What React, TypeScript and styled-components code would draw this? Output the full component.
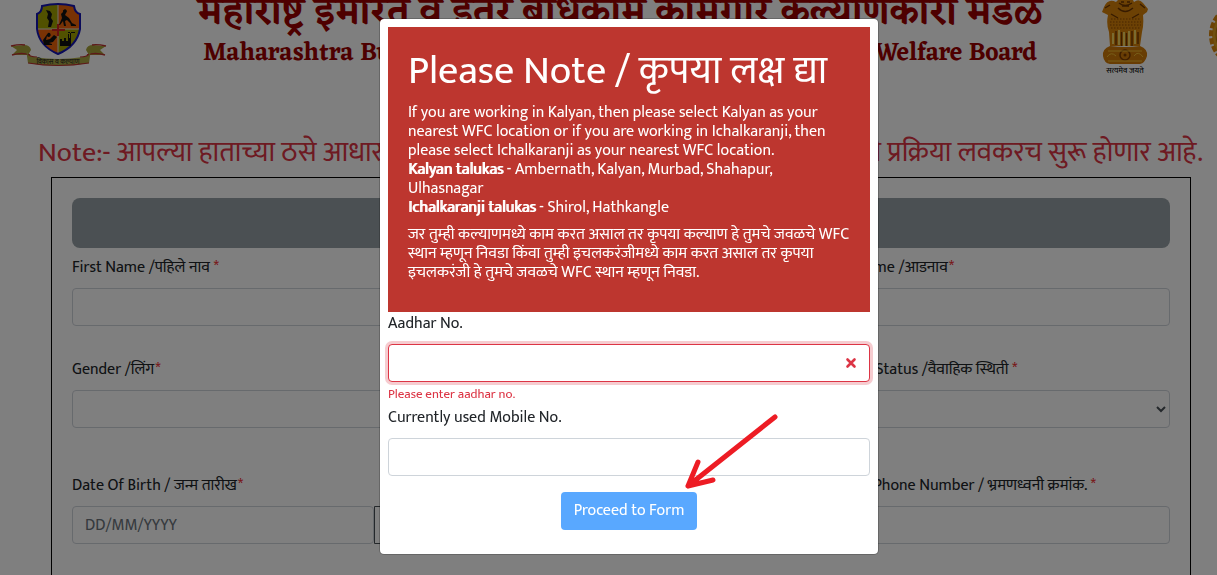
import React from "react";
import styled, { createGlobalStyle } from "styled-components";

const GlobalStyle = createGlobalStyle`
  *, *::before, *::after { box-sizing: border-box; }
  html, body { height: 100%; }
  body {
    margin: 0;
    overflow: hidden;
    background: #fff;
    color: #212529;
    font-family: Mukta, Lato, "Noto Sans Devanagari", "Noto Sans", sans-serif;
    font-size: 16px;
    line-height: 24px;
  }
`;

const Header = styled.header`
  display: flex;
  align-items: flex-start;
  height: 96px;
  padding-left: 10px;
  overflow: hidden;
`;

const BoardLogo = styled.svg`
  flex: none;
  width: 97px;
  height: 72px;
`;

const Titles = styled.div`
  flex: 1;
  display: flex;
  flex-direction: column;
  align-items: center;
  padding-left: 32px;
  color: #9c0000;
  white-space: nowrap;
`;

const TitleMarathi = styled.div`
  height: 36px;
  font-family: Eczar, Mukta, "Noto Sans Devanagari", sans-serif;
  font-size: 37px;
  line-height: 28px;
  font-weight: 600;
`;

const TitleEnglish = styled.div`
  display: flex;
  gap: 32px;
  font-family: Eczar, "Liberation Serif", serif;
  font-size: 25px;
  line-height: 36px;
  font-weight: 600;
`;

const Emblem = styled.svg`
  flex: none;
  width: 48px;
  height: 76px;
  margin-right: 58px;
`;

const Seal = styled.svg`
  flex: none;
  width: 70px;
  height: 70px;
  margin-right: -60px;
`;

const Notice = styled.p`
  display: flex;
  justify-content: space-between;
  margin: 32px 14px 0 38px;
  height: 49px;
  color: #dc3545;
  font-size: 28px;
  line-height: 50px;
  white-space: nowrap;
`;

const FormCard = styled.form`
  margin: 0 26px 0 51px;
  padding: 20px;
  border: 1px solid #000;
`;

const SectionBar = styled.div`
  height: 50px;
  border-radius: 8px;
  background: #96a0a6;
`;

const Grid = styled.div`
  display: grid;
  grid-template-columns: repeat(3, 1fr);
  column-gap: 30px;
  padding-top: 8px;
`;

const Field = styled.div<{ $tall?: boolean }>`
  display: flex;
  flex-direction: column;
  gap: 8px;
  height: ${(p) => (p.$tall ? 116 : 102)}px;
`;

const Label = styled.label`
  line-height: 24px;
  white-space: nowrap;
`;

const Star = styled.span`
  color: #f01420;
`;

const Input = styled.input<{ $invalid?: boolean }>`
  display: block;
  width: 100%;
  height: 38px;
  padding: 6px 12px;
  border: 1px solid ${(p) => (p.$invalid ? "#dc3545" : "#ced4da")};
  border-radius: 4px;
  background: #fff;
  box-shadow: ${(p) => (p.$invalid ? "0 0 0 3px rgba(220, 53, 69, 0.25)" : "none")};
  color: #495057;
  font: inherit;
  outline: none;
  &::placeholder { color: #6c757d; opacity: 1; }
`;

const Select = styled.select`
  width: 100%;
  height: 38px;
  padding: 6px 8px;
  border: 1px solid #ced4da;
  border-radius: 4px;
  background: #fff;
  color: #495057;
  font: inherit;
`;

const DateGroup = styled.div`
  display: flex;
`;

const DateButton = styled.button`
  flex: none;
  width: 44px;
  height: 38px;
  border: 1px solid #495057;
  border-radius: 0 4px 4px 0;
  background: #fff;
`;

const Backdrop = styled.div`
  position: fixed;
  inset: 0;
  display: flex;
  justify-content: center;
  align-items: flex-start;
  padding: 18px 0 0 41px;
  background: rgba(0, 0, 0, 0.5);
`;

const Modal = styled.section`
  position: relative;
  width: 500px;
  padding: 8px 8px 24px;
  border: 1px solid rgba(0, 0, 0, 0.2);
  border-radius: 5px;
  background: #fff;
  background-clip: padding-box;
`;

const Alert = styled.div`
  height: 285px;
  padding: 20px;
  background: #bd362f;
  color: #fff;
`;

const AlertTitle = styled.h1`
  margin: 0 0 8px;
  font-size: 40px;
  line-height: 48px;
  font-weight: 400;
  white-space: nowrap;
`;

const AlertText = styled.p`
  margin: 0 0 8px;
  line-height: 19px;
  white-space: nowrap;
`;

const Heavy = styled.strong`
  font-weight: 400;
  text-shadow: 1px 0 currentColor;
`;

const ModalField = styled.div`
  display: flex;
  flex-direction: column;
  gap: 8px;
`;

const InputWrap = styled.div`
  position: relative;
`;

const Cross = styled.svg`
  position: absolute;
  right: 13px;
  top: 13px;
  width: 12px;
  height: 12px;
`;

const ErrorText = styled.p`
  margin: 0;
  padding-top: 3px;
  height: 24px;
  color: #dc3545;
  font-size: 13px;
  line-height: 19px;
`;

const Proceed = styled.button`
  display: block;
  width: 136px;
  height: 38px;
  margin: 16px auto 0;
  padding: 0;
  border: 0;
  border-radius: 4px;
  background: #59a8ff;
  color: #fff;
  font: inherit;
`;

const Pointer = styled.svg`
  position: absolute;
  left: 302px;
  top: 393px;
  width: 100px;
  height: 80px;
  pointer-events: none;
`;

function BoardLogoArt() {
  return (
    <BoardLogo viewBox="0 0 97 72" aria-label="विकास व कल्याण">
      <defs>
        <clipPath id="shield">
          <path d="M32 6 Q48 2 64 6 Q65 13 70 14 V29 Q67 46 48 54 Q29 46 27 29 V14 Q32 12 32 6Z" />
        </clipPath>
      </defs>
      <g clipPath="url(#shield)">
        <rect x="26" y="0" width="22" height="29" fill="#a3a300" />
        <rect x="48" y="0" width="24" height="29" fill="#f0650a" />
        <rect x="26" y="29" width="22" height="28" fill="#f0650a" />
        <rect x="48" y="29" width="24" height="28" fill="#a3a300" />
        <path d="M48 4V54M26 29H71" stroke="#ddd" strokeWidth="1" />
      </g>
      <path d="M48 24V36M42 30H55" stroke="#c22" strokeWidth="2" />
      <path d="M32 6 Q48 2 64 6 Q65 13 70 14 V29 Q67 46 48 54 Q29 46 27 29 V14 Q32 12 32 6Z" fill="none" stroke="#1414b4" strokeWidth="2" />
      <path d="M36 10l4 1 2 3-1 4 2 3-2 6-3 0 1-6-2-3 1-4z" fill="#111" />
      <path d="M53 12a2 2 0 1 1 3 1l-1 2 4 3 3 5-1 1-4-4-2 1 1 5h-2l-1-5-3 4h-1l3-7-1-4z M60 22l6 3v1h-5z" fill="#111" />
      <path d="M38 33a2 2 0 1 1-1 3l-1 4 4-1 4-4 3 2-4 5-4 1 3 1v1h-8l-1-5z" fill="#111" />
      <path d="M50 46V39h2v2h2v-3h2v3h2v-7h1v4h1v-6h1v14z M58 33h7v-1h-7z" fill="#111" />
      <path d="M1 46 L14 45 Q20 45 21 50 L18 55 L2 55 L7 50Z M96 46 L83 45 Q77 45 76 50 L79 55 L95 55 L90 50Z" fill="#a6a33a" />
      <path d="M1 46 Q10 44 15 45 M2 55 Q12 52 20 55 M96 46 Q87 44 82 45 M95 55 Q85 52 77 55" fill="none" stroke="#b33" strokeWidth="1.4" />
      <path d="M16 49 Q18 56 24 57 Q48 61 73 57 Q79 56 81 49 L79 63 Q48 69 18 63Z" fill="#aaa845" />
      <path d="M18 63 Q48 68 79 63 M18 54 Q20 57 27 57 M79 54 Q77 57 70 57" fill="none" stroke="#b33" strokeWidth="1.2" />
      <text x="48" y="64" textAnchor="middle" fontSize="7" fill="#222">विकास व कल्याण</text>
    </BoardLogo>
  );
}

function EmblemArt() {
  return (
    <Emblem viewBox="0 0 48 76" aria-label="सत्यमेव जयते">
      <path d="M17 0H32L33 2Q38-2 42 3L47 9 46 12 42 15Q43 25 41 32L39 46H9L8 32Q5 24 7 15L1 12 3 7Q7-2 15 2Z" fill="#d98309" />
      <path d="M9 46Q24 48 39 46Q47 49 46 56Q44 63 39 64H9Q3 63 2 56Q1 49 9 46Z" fill="#d07a08" />
      <path d="M18 3q6 5 13 0M17 8q7 7 15 0M4 8l5-3M39 4l5 4M10 14l7 4M38 14l-7 4M20 2h3M26 2h3M21 6h7" stroke="#6e3600" strokeWidth="1.4" fill="none" />
      <path d="M10 19H39M9 22H40M9 25H40M10 28H39" stroke="#8f4a00" strokeWidth="1.2" strokeDasharray="1.5 1.5" />
      <path d="M12 33V44M18 30V45M23 32V46M28 31V46M34 30V44" stroke="#f5d660" strokeWidth="2" />
      <path d="M15 31V45M20.500 32V46M25.500 33V46M31 31V46M37 32V44" stroke="#743a00" strokeWidth="1.400" />
      <circle cx="24" cy="55" r="5" fill="none" stroke="#7c3d00" strokeWidth="1.500" />
      <circle cx="24" cy="55" r="1.500" fill="#7c3d00" />
      <path d="M6 57q4-6 9-1M33 56q4-6 9 1M7 61H41M7 51H41" stroke="#f0bd32" strokeWidth="1" fill="none" />
      <text x="24" y="73" textAnchor="middle" fontSize="8" fontWeight="500" fill="#111">सत्यमेव जयते</text>
    </Emblem>
  );
}

function Required({ children }: { children: React.ReactNode }) {
  return (
    <>
      {children}
      <Star>*</Star>
    </>
  );
}

export default function App() {
  return (
    <>
      <GlobalStyle />
      <Header>
        <BoardLogoArt />
        <Titles>
          <TitleMarathi>महाराष्ट्र इमारत व इतर बांधकाम कामगार कल्याणकारी मंडळ</TitleMarathi>
          <TitleEnglish>
            <span>Maharashtra Building and Other</span>
            <span>Construction Worker's Welfare Board</span>
          </TitleEnglish>
        </Titles>
        <EmblemArt />
        <Seal viewBox="0 0 70 70" aria-hidden="true">
          <circle cx="35" cy="35" r="30" fill="#e0a020" />
          <circle cx="35" cy="35" r="31" fill="none" stroke="#d8860c" strokeWidth="4" strokeDasharray="6 2" />
          <circle cx="35" cy="35" r="26" fill="none" stroke="#b87408" strokeWidth="1" />
        </Seal>
      </Header>
      <Notice>
        <span>Note:- आपल्या हाताच्या ठसे आधार बायोमेट्रिक</span>
        <span>करण्याची प्रक्रिया लवकरच सुरू होणार आहे.</span>
      </Notice>
      <FormCard>
        <SectionBar />
        <Grid>
          <Field>
            <Label htmlFor="first"><Required>First Name /पहिले नाव </Required></Label>
            <Input id="first" />
          </Field>
          <Field>
            <Label htmlFor="middle"><Required>Middle Name /मधले नाव</Required></Label>
            <Input id="middle" />
          </Field>
          <Field>
            <Label htmlFor="last"><Required>Last Name /आडनाव</Required></Label>
            <Input id="last" />
          </Field>
          <Field $tall>
            <Label htmlFor="gender"><Required>Gender /लिंग</Required></Label>
            <Select id="gender" />
          </Field>
          <Field $tall>
            <Label htmlFor="age">Age /वय</Label>
            <Input id="age" />
          </Field>
          <Field $tall>
            <Label htmlFor="marital"><Required>Marital Status /वैवाहिक स्थिती </Required></Label>
            <Select id="marital" />
          </Field>
          <Field $tall>
            <Label htmlFor="dob"><Required>Date Of Birth / जन्म तारीख</Required></Label>
            <DateGroup>
              <Input id="dob" placeholder="DD/MM/YYYY" />
              <DateButton type="button" aria-label="Open calendar" />
            </DateGroup>
          </Field>
          <Field $tall>
            <Label htmlFor="aadhar2">Aadhar No.</Label>
            <Input id="aadhar2" />
          </Field>
          <Field $tall>
            <Label htmlFor="phone"><Required>Mobile Phone Number / भ्रमणध्वनी क्रमांक. </Required></Label>
            <Input id="phone" />
          </Field>
        </Grid>
      </FormCard>
      <Backdrop>
        <Modal role="dialog" aria-modal="true" aria-labelledby="note-title">
          <Alert>
            <AlertTitle id="note-title">Please Note / कृपया लक्ष द्या</AlertTitle>
            <AlertText>
              If you are working in Kalyan, then please select Kalyan as your<br />
              nearest WFC location or if you are working in Ichalkaranji, then<br />
              please select Ichalkaranji as your nearest WFC location.<br />
              <Heavy>Kalyan talukas</Heavy> - Ambernath, Kalyan, Murbad, Shahapur,<br />
              Ulhasnagar<br />
              <Heavy>Ichalkaranji talukas</Heavy> - Shirol, Hathkangle
            </AlertText>
            <AlertText>
              जर तुम्ही कल्याणमध्ये काम करत असाल तर कृपया कल्याण हे तुमचे जवळचे WFC<br />
              स्थान म्हणून निवडा किंवा तुम्ही इचलकरंजीमध्ये काम करत असाल तर कृपया<br />
              इचलकरंजी हे तुमचे जवळचे WFC स्थान म्हणून निवडा.
            </AlertText>
          </Alert>
          <ModalField>
            <Label htmlFor="aadhar">Aadhar No.</Label>
            <InputWrap>
              <Input id="aadhar" $invalid aria-invalid="true" aria-describedby="aadhar-error" />
              <Cross viewBox="0 0 12 12" aria-hidden="true">
                <path d="M2.500 2.500L9.500 9.500M9.500 2.500L2.500 9.500" stroke="#dc3545" strokeWidth="2.600" strokeLinecap="round" />
              </Cross>
            </InputWrap>
          </ModalField>
          <ErrorText id="aadhar-error">Please enter aadhar no.</ErrorText>
          <ModalField>
            <Label htmlFor="mobile">Currently used Mobile No.</Label>
            <Input id="mobile" />
          </ModalField>
          <Proceed type="button">Proceed to Form</Proceed>
          <Pointer viewBox="0 0 100 80" aria-hidden="true">
            <path d="M93 5L6 74M16 50L6 74L31 68" fill="none" stroke="#ed1c24" strokeWidth="5" strokeLinecap="round" strokeLinejoin="round" />
          </Pointer>
        </Modal>
      </Backdrop>
    </>
  );
}
